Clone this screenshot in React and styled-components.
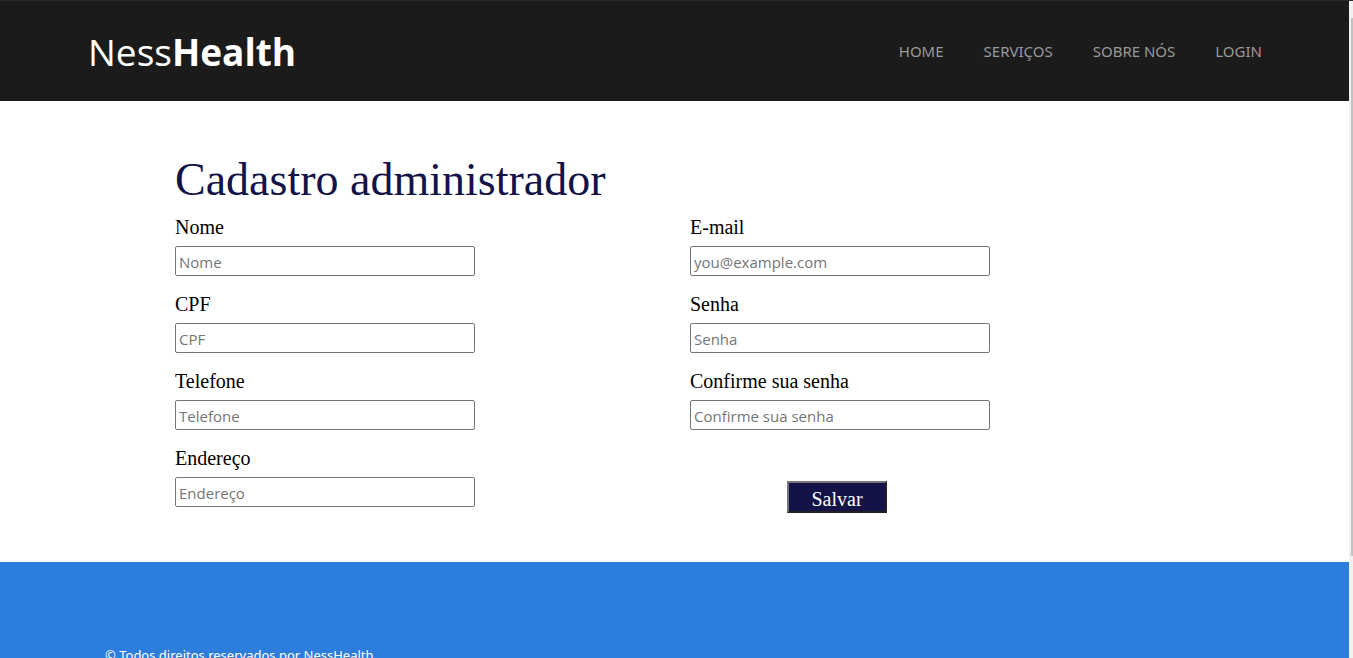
import React from "react";
import styled, { createGlobalStyle } from "styled-components";

const sans = '"Segoe UI", "Open Sans", "Noto Sans", sans-serif';
const uiSans = '"Segoe UI", "Noto Sans", "Open Sans", sans-serif';
const serif = '"Times New Roman", "Liberation Serif", serif';

const GlobalStyle = createGlobalStyle`
  * {
    box-sizing: border-box;
  }

  body {
    margin: 0;
    background: #fff;
    font-family: ${sans};
  }
`;

const Shell = styled.div`
  display: flex;
  height: 100vh;
`;

const Page = styled.div`
  flex: 1;
  min-width: 0;
  overflow-y: auto;
  scrollbar-width: none;
`;

const ScrollTrack = styled.div`
  flex: none;
  width: 4px;
  padding: 17px 0 0 2px;
  border-top: 1px solid #2a2a2a;
  background: #f1f1f1;
`;

const ScrollThumb = styled.div`
  height: 84%;
  background: #c1c1c1;
`;

const Header = styled.header`
  display: flex;
  align-items: center;
  justify-content: space-between;
  min-height: 101px;
  padding: 0 87px 0 88px;
  border-top: 1px solid #2a2a2a;
  background: #1b1b1b;
`;

const Logo = styled.a`
  padding-top: 2px;
  color: #fff;
  font-size: 37px;
  line-height: 56px;
  text-decoration: none;
`;

const Nav = styled.nav`
  display: flex;
  gap: 40px;
`;

const NavLink = styled.a`
  color: #999;
  font-family: ${uiSans};
  font-size: 15px;
  line-height: 24px;
  text-decoration: none;
`;

const Main = styled.main`
  padding: 51px 144px 49px 175px;
  font-family: ${serif};
`;

const Title = styled.h1`
  margin: 0 0 7px;
  color: #131348;
  font-size: 46px;
  font-weight: 400;
  line-height: 56px;
`;

const Form = styled.form`
  display: grid;
  grid-template-columns: 1fr 1fr;
`;

const Column = styled.div`
  display: flex;
  flex-direction: column;
  gap: 16px;
`;

const Field = styled.div`
  display: flex;
  flex-direction: column;
  gap: 7px;
`;

const Label = styled.label`
  color: #000;
  font-size: 20px;
  line-height: 24px;
`;

const Input = styled.input`
  width: 300px;
  max-width: 100%;
  height: 30px;
  padding: 3px 3px 1px;
  border: 1px solid #767676;
  border-radius: 2px;
  background: #fff;
  color: #000;
  font-family: ${sans};
  font-size: 15px;

  &::placeholder {
    color: #757575;
  }
`;

const Actions = styled.div`
  padding: 35px 0 0 97px;
`;

const SaveButton = styled.button`
  display: block;
  width: 100px;
  height: 32px;
  padding: 4px 0 0;
  border: 2px solid;
  border-color: #767676 #212121 #212121 #767676;
  background: #131348;
  color: #fff;
  font-family: ${serif};
  font-size: 20px;
  line-height: 24px;
`;

const Footer = styled.footer`
  padding: 83px 105px;
  background: #2d7ddd;
  color: #fff;
  font-family: ${uiSans};
  font-size: 13px;
  line-height: 20px;
`;

const Copyright = styled.p`
  margin: 0;
`;

const links = ["HOME", "SERVIÇOS", "SOBRE NÓS", "LOGIN"];

const personalFields = [
  { id: "nome", label: "Nome", type: "text" },
  { id: "cpf", label: "CPF", type: "text" },
  { id: "telefone", label: "Telefone", type: "tel" },
  { id: "endereco", label: "Endereço", type: "text" },
];

const accountFields = [
  { id: "email", label: "E-mail", type: "email", placeholder: "you@example.com" },
  { id: "senha", label: "Senha", type: "password" },
  { id: "confirmar", label: "Confirme sua senha", type: "password" },
];

function FormField({ id, label, type, placeholder }) {
  return (
    <Field>
      <Label htmlFor={id}>{label}</Label>
      <Input id={id} name={id} type={type} placeholder={placeholder || label} />
    </Field>
  );
}

export default function App() {
  return (
    <>
      <GlobalStyle />
      <Shell>
        <Page>
          <Header>
            <Logo href="#">
              Ness<b>Health</b>
            </Logo>
            <Nav>
              {links.map((text) => (
                <NavLink key={text} href="#">
                  {text}
                </NavLink>
              ))}
            </Nav>
          </Header>
          <Main>
            <Title>Cadastro administrador</Title>
            <Form onSubmit={(event) => event.preventDefault()}>
              <Column>
                {personalFields.map((field) => (
                  <FormField key={field.id} {...field} />
                ))}
              </Column>
              <Column>
                {accountFields.map((field) => (
                  <FormField key={field.id} {...field} />
                ))}
                <Actions>
                  <SaveButton type="submit">Salvar</SaveButton>
                </Actions>
              </Column>
            </Form>
          </Main>
          <Footer>
            <Copyright>© Todos direitos reservados por NessHealth</Copyright>
          </Footer>
        </Page>
        <ScrollTrack aria-hidden="true">
          <ScrollThumb />
        </ScrollTrack>
      </Shell>
    </>
  );
}
